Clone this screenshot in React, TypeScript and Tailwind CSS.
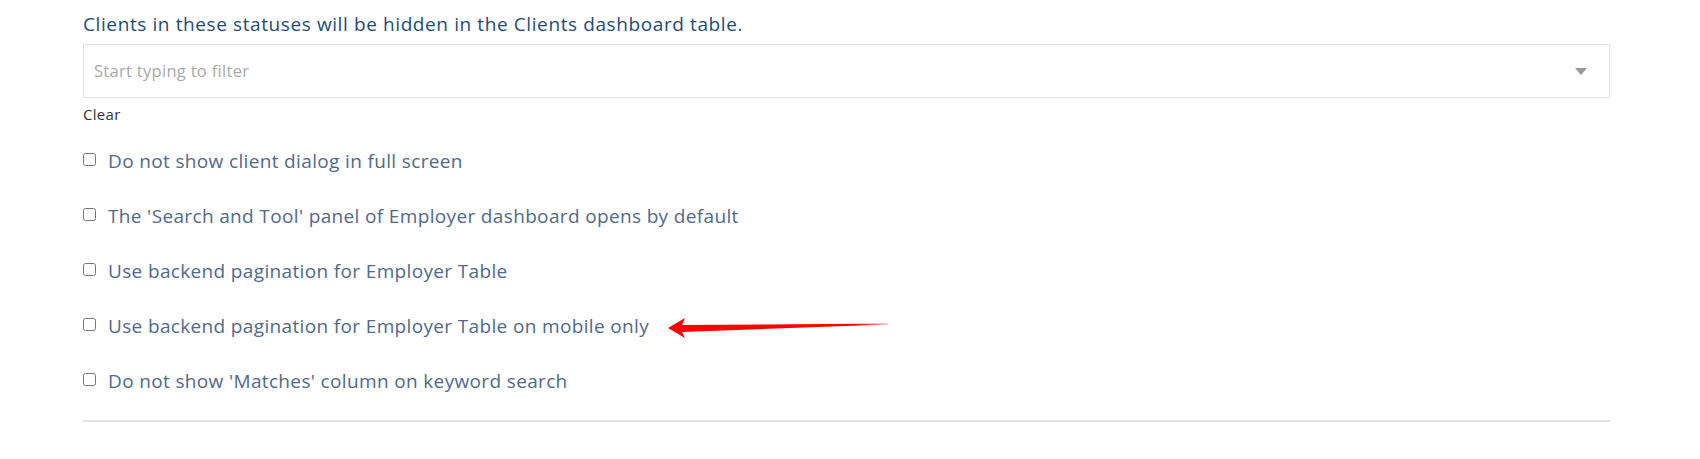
import React from "react";

const rows = [
  "Do not show client dialog in full screen",
  "The 'Search and Tool' panel of Employer dashboard opens by default",
  "Use backend pagination for Employer Table",
  "Use backend pagination for Employer Table on mobile only",
  "Do not show 'Matches' column on keyword search",
];

export default function App() {
  return (
    <div className="relative w-[1700px] h-[459px] bg-white font-['Open_Sans',sans-serif]">
      <div className="pl-[83px] pt-[12px] w-[1610px]">
        <div className="text-[19px] leading-[24px] font-medium text-[#1f4c75] tracking-[0.6px]">
          Clients in these statuses will be hidden in the Clients dashboard table.
        </div>
        <div className="mt-[8px] h-[54px] border border-[#e4e4e4] flex items-center justify-between pl-[10px] pr-[22px]">
          <span className="text-[16.5px] text-[#a9a9a9] tracking-[0.3px]">Start typing to filter</span>
          <svg width="12" height="7" viewBox="0 0 12 7">
            <path d="M0 0 L12 0 L6 7 Z" fill="#999" />
          </svg>
        </div>
        <div className="mt-[7px] text-[15px] leading-[18px] text-[#333] tracking-[0.3px]">Clear</div>
        <div className="mt-[28px] flex flex-col gap-[35px]">
          {rows.map((r) => (
            <label key={r} className="flex items-center h-[20px]">
              <input type="checkbox" className="m-0 w-[13px] h-[13px] mr-[12px] -mt-[4px]" />
              <span className="text-[19px] text-[#51698a] tracking-[0.35px]">{r}</span>
            </label>
          ))}
        </div>
        <div className="mt-[29px] h-[2px] bg-[#e2e2e2]" />
      </div>
      <svg className="absolute left-[666px] top-[314px]" width="226" height="26" viewBox="0 0 226 26">
        <defs>
          <linearGradient id="g" x1="0" x2="1" y1="0" y2="0">
            <stop offset="0" stopColor="#ff0000" />
            <stop offset="0.85" stopColor="#ff0000" />
            <stop offset="1" stopColor="#ff0000" stopOpacity="0.4" />
          </linearGradient>
        </defs>
        <path d="M2 14 L19 4 L16 11 L222 9.5 L222 10.5 L16 18 L19 24 Z" fill="url(#g)" />
      </svg>
    </div>
  );
}
